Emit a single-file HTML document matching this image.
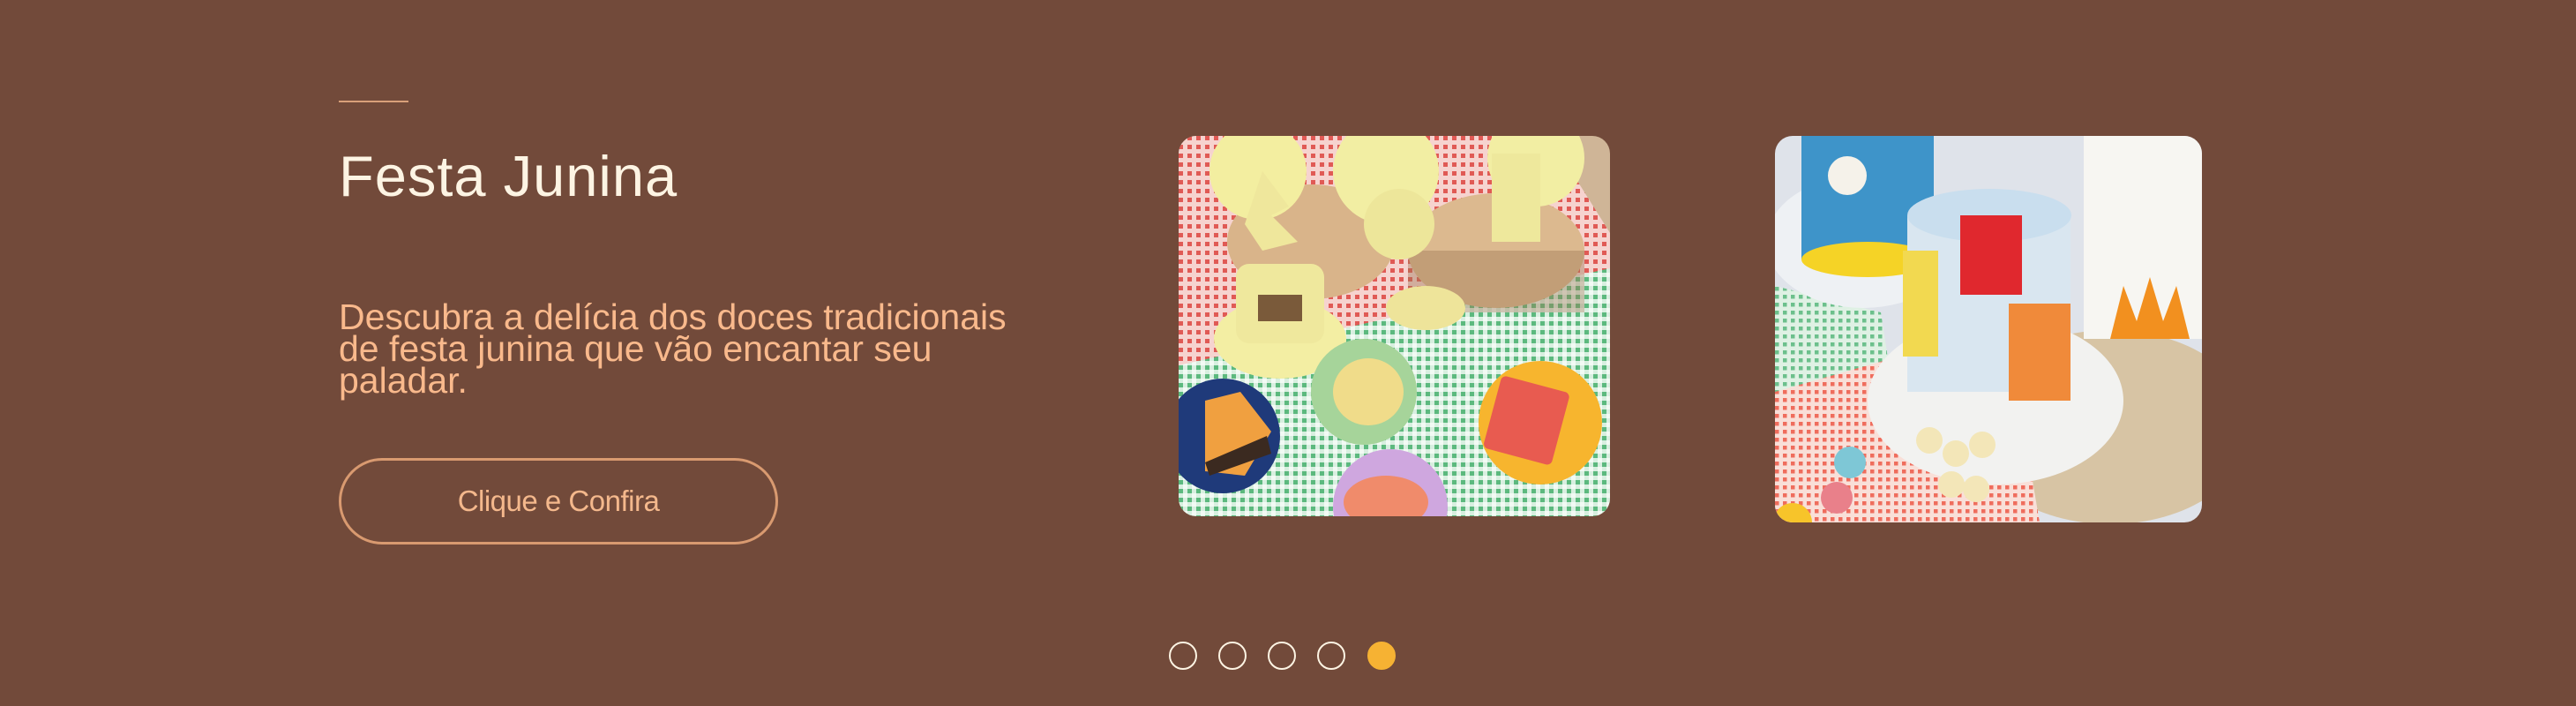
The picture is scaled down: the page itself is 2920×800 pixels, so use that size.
<!DOCTYPE html>
<html><head><meta charset="utf-8"><style>
html,body{margin:0;padding:0}
body{width:2920px;height:800px;background:#724a3a;position:relative;overflow:hidden;font-family:"Liberation Sans","DejaVu Sans",sans-serif}
.line{position:absolute;left:384px;top:114px;width:79px;height:2px;background:#d9a07a}
h1{position:absolute;left:384px;top:160px;margin:0;font-weight:normal;font-size:65px;line-height:80px;color:#fdf4e3;letter-spacing:1px}
p{position:absolute;left:384px;top:341px;margin:0;width:900px;font-size:41px;line-height:36px;color:#f9b98c;white-space:nowrap}
.btn{position:absolute;left:384px;top:519px;width:492px;height:92px;border:3px solid #d99a70;border-radius:50px;color:#f4b88c;font-size:33px;display:flex;align-items:center;justify-content:center;letter-spacing:-0.5px}
.img{position:absolute;border-radius:20px;overflow:hidden}
.dot{position:absolute;top:727px;width:28px;height:28px;border:2px solid #fdf4e3;border-radius:50%;box-sizing:content-box}
</style></head><body>
<div class="line"></div>
<h1>Festa Junina</h1>
<p>Descubra a delícia dos doces tradicionais<br>de festa junina que vão encantar seu<br>paladar.</p>
<div class="btn">Clique e Confira</div>

<div class="img" style="left:1336px;top:154px;width:489px;height:431px">
<svg width="489" height="431" viewBox="0 0 489 431">
<defs>
<pattern id="r" width="10" height="10" patternUnits="userSpaceOnUse"><rect width="10" height="10" fill="#f6d3cf"/><rect width="5" height="5" fill="#e05a55"/></pattern>
<pattern id="g" width="10" height="10" patternUnits="userSpaceOnUse"><rect width="10" height="10" fill="#d8efe0"/><rect width="5" height="5" fill="#5cb97e"/><rect x="5" y="5" width="5" height="5" fill="#f2faf4"/></pattern>
</defs>
<rect width="489" height="431" fill="#cfb597"/>
<polygon points="0,0 420,0 489,110 489,200 200,330 0,300" fill="url(#r)"/>
<polygon points="0,260 489,150 489,431 0,431" fill="url(#g)"/>
<ellipse cx="150" cy="120" rx="95" ry="65" fill="#d9b48a"/>
<ellipse cx="360" cy="130" rx="100" ry="65" fill="#dcb98f"/>
<rect x="260" y="130" width="200" height="70" fill="#9c7553" opacity=".4"/>
<circle cx="90" cy="40" r="55" fill="#f3eea0"/>
<circle cx="235" cy="40" r="60" fill="#f2eea3"/>
<circle cx="405" cy="25" r="55" fill="#f2eea3"/>
<path d="M95 40 l30 40 -20 10 30 30 -40 10 -20 -30z" fill="#efe79c"/>
<circle cx="250" cy="100" r="40" fill="#ede69a"/>
<rect x="355" y="20" width="55" height="100" fill="#eee89c"/>
<ellipse cx="115" cy="230" rx="75" ry="45" fill="#f3eea3"/>
<rect x="65" y="145" width="100" height="90" rx="15" fill="#efe89d"/>
<rect x="90" y="180" width="50" height="30" fill="#7a5a3a"/>
<ellipse cx="280" cy="195" rx="45" ry="25" fill="#eee49a"/>
<circle cx="50" cy="340" r="65" fill="#1f3a7a"/>
<path d="M30 300 l40 -10 35 45 -30 50 -45 -5z" fill="#f0a040"/>
<path d="M30 370 l70 -30 5 20 -70 25z" fill="#3b2a20"/>
<circle cx="210" cy="290" r="60" fill="#a6d49a"/>
<ellipse cx="215" cy="290" rx="40" ry="38" fill="#f0dc8a"/>
<circle cx="410" cy="325" r="70" fill="#f7b52e"/>
<rect x="355" y="280" width="80" height="85" rx="6" fill="#e85b50" transform="rotate(15 395 320)"/>
<circle cx="240" cy="420" r="65" fill="#cfa7df"/>
<ellipse cx="235" cy="415" rx="48" ry="30" fill="#f08b6b"/>
</svg></div>

<div class="img" style="left:2012px;top:154px;width:484px;height:438px">
<svg width="484" height="438" viewBox="0 0 484 438">
<defs>
<pattern id="r2" width="9" height="9" patternUnits="userSpaceOnUse"><rect width="9" height="9" fill="#f9dfd8"/><rect width="4.5" height="4.5" fill="#ef6d5d"/></pattern>
<pattern id="g2" width="9" height="9" patternUnits="userSpaceOnUse"><rect width="9" height="9" fill="#dff1e4"/><rect width="4.5" height="4.5" fill="#6cc08c"/></pattern>
</defs>
<rect width="484" height="438" fill="#dfe3ea"/>
<ellipse cx="380" cy="330" rx="160" ry="110" fill="#d7c4a4"/>
<polygon points="0,170 120,200 140,330 0,330" fill="url(#g2)"/>
<polygon points="0,290 140,250 280,320 300,438 0,438" fill="url(#r2)"/>
<ellipse cx="100" cy="120" rx="110" ry="75" fill="#eef1f4"/>
<rect x="30" y="0" width="150" height="140" fill="#3e94c9"/>
<ellipse cx="105" cy="140" rx="75" ry="20" fill="#f5d326"/>
<circle cx="82" cy="45" r="22" fill="#f5f2ea"/>
<rect x="350" y="0" width="134" height="230" fill="#f7f6f2"/>
<path d="M380 230 l15 -60 15 40 15 -50 15 50 15 -40 15 60z" fill="#f2901f"/>
<ellipse cx="250" cy="300" rx="145" ry="95" fill="#f2f2f0"/>
<rect x="150" y="90" width="185" height="200" fill="#d9e6f0"/>
<ellipse cx="243" cy="90" rx="93" ry="30" fill="#c9deee"/>
<rect x="210" y="90" width="70" height="90" fill="#e0282e"/>
<rect x="265" y="190" width="70" height="110" fill="#f08a3a"/>
<rect x="145" y="130" width="40" height="120" fill="#f2d950"/>
<circle cx="85" cy="370" r="18" fill="#7ec7d6"/>
<circle cx="70" cy="410" r="18" fill="#e9808a"/>
<circle cx="175" cy="345" r="15" fill="#f3e6b8"/>
<circle cx="205" cy="360" r="15" fill="#f3e6b8"/>
<circle cx="235" cy="350" r="15" fill="#f3e6b8"/>
<circle cx="200" cy="395" r="15" fill="#f3e6b8"/>
<circle cx="228" cy="400" r="15" fill="#f3e6b8"/>
<circle cx="20" cy="438" r="22" fill="#f7c42a"/>
</svg></div>

<div class="dot" style="left:1325px"></div>
<div class="dot" style="left:1381px"></div>
<div class="dot" style="left:1437px"></div>
<div class="dot" style="left:1493px"></div>
<div class="dot" style="left:1550px;background:#f6b233;border-color:#f6b233"></div>
</body></html>
